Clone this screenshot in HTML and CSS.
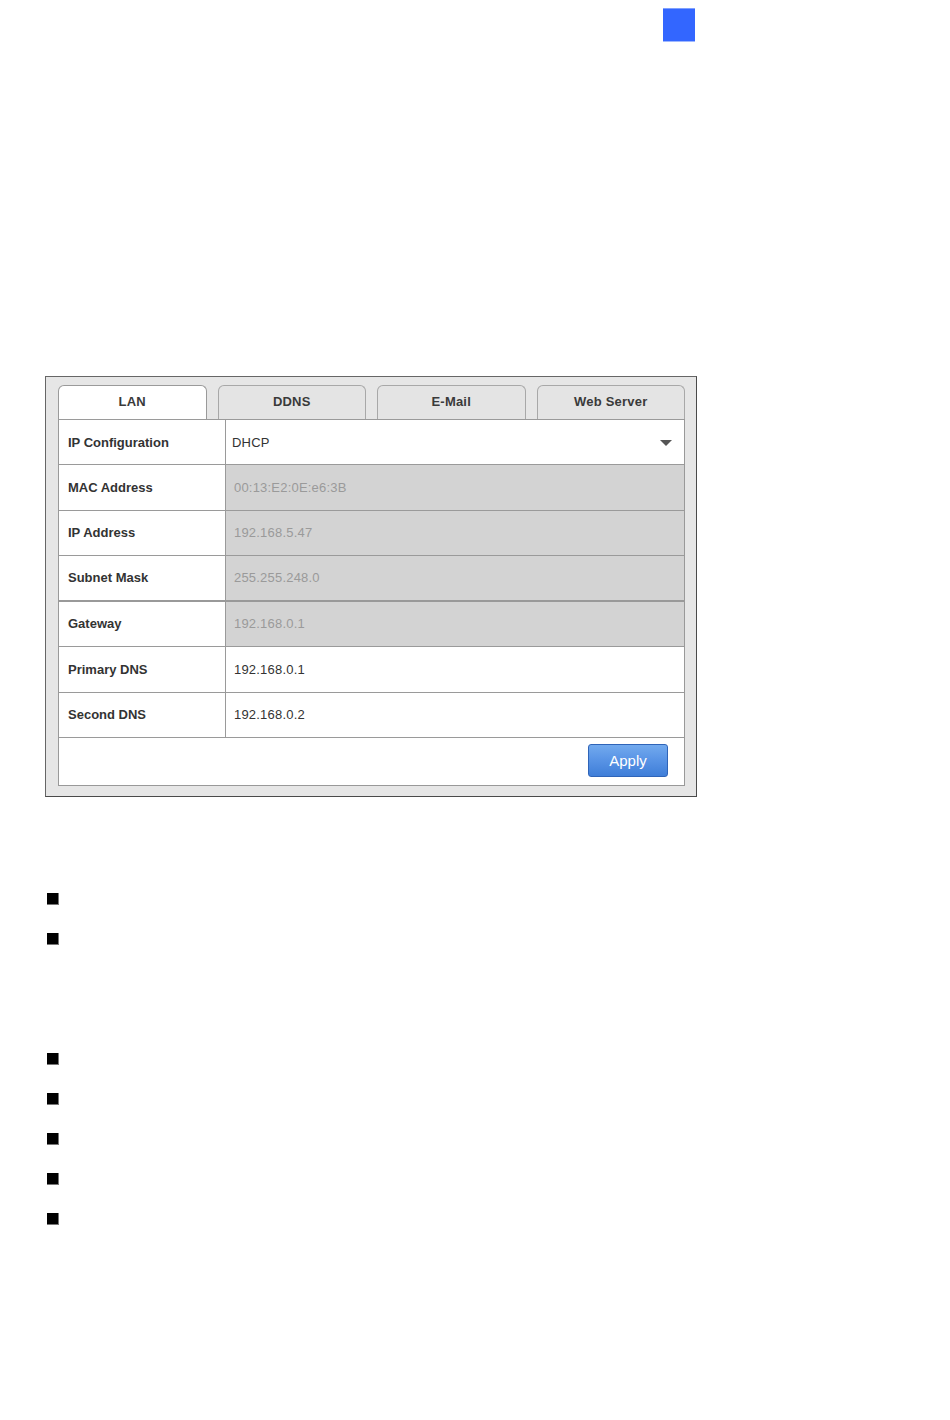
FILE: index.html
```html
<!DOCTYPE html>
<html>
<head>
<meta charset="utf-8">
<link rel="stylesheet" href="styles.css">
</head>
<body>
<div class="page">
  <div class="marker"></div>

  <div class="panel">
    <div class="tabs">
      <div class="tab active">LAN</div>
      <div class="tab">DDNS</div>
      <div class="tab">E-Mail</div>
      <div class="tab">Web Server</div>
    </div>
    <div class="table">
      <div class="row">
        <div class="label">IP Configuration</div>
        <div class="value select"><span class="dhcp">DHCP</span><span class="arrow"></span></div>
      </div>
      <div class="row">
        <div class="label">MAC Address</div>
        <div class="value disabled">00:13:E2:0E:e6:3B</div>
      </div>
      <div class="row">
        <div class="label">IP Address</div>
        <div class="value disabled">192.168.5.47</div>
      </div>
      <div class="row strong">
        <div class="label">Subnet Mask</div>
        <div class="value disabled">255.255.248.0</div>
      </div>
      <div class="row">
        <div class="label">Gateway</div>
        <div class="value disabled">192.168.0.1</div>
      </div>
      <div class="row">
        <div class="label">Primary DNS</div>
        <div class="value">192.168.0.1</div>
      </div>
      <div class="row">
        <div class="label">Second DNS</div>
        <div class="value">192.168.0.2</div>
      </div>
      <div class="actions">
        <button class="apply">Apply</button>
      </div>
    </div>
  </div>

  <ul class="bullets first">
    <li></li>
    <li></li>
  </ul>
  <ul class="bullets second">
    <li></li>
    <li></li>
    <li></li>
    <li></li>
    <li></li>
  </ul>
</div>
</body>
</html>
```

FILE: styles.css
```css
* { box-sizing: border-box; }

html, body {
  margin: 0;
  padding: 0;
  background: #ffffff;
}

body {
  font-family: "Liberation Sans", Arial, Helvetica, sans-serif;
  color: #333333;
}

.page {
  width: 950px;
  height: 1420px;
  padding-top: 8px;
}

.marker {
  margin-left: 663px;
  width: 32px;
  height: 34px;
  background: #3366ff;
  border-top: 1px solid #7fa0ff;
  border-bottom: 1px solid #9fb8ff;
}

.panel {
  margin-top: 334px;
  margin-left: 45px;
  width: 652px;
  height: 421px;
  background: #e6e6e6;
  border: 1px solid #4a4a4a;
  border-left-color: #666666;
  border-top-color: #666666;
  padding: 8px 11px 10px 12px;
}

.tabs {
  display: grid;
  grid-template-columns: repeat(4, 1fr);
  column-gap: 11px;
  height: 34px;
}

.tab {
  display: flex;
  align-items: center;
  justify-content: center;
  padding-bottom: 2px;
  font-size: 13px;
  font-weight: bold;
  color: #3a3a3a;
  letter-spacing: 0.2px;
  background: #e4e4e4;
  border: 1px solid #a8a8a8;
  border-bottom: none;
  border-radius: 6px 6px 0 0;
}

.tab.active {
  background: #ffffff;
  border-color: #9a9a9a;
}

.table {
  background: #ffffff;
  border: 1px solid #999999;
  border-top: 1px solid #9a9a9a;
}

.row {
  display: grid;
  grid-template-columns: 167px 1fr;
  height: 45.5px;
  border-bottom: 1px solid #9a9a9a;
}

.row:first-child {
  height: 45px;
}

.row.strong {
  border-bottom: 2px solid #999999;
}

.label {
  display: flex;
  align-items: center;
  padding-left: 9px;
  font-size: 13px;
  font-weight: bold;
  color: #333333;
  border-right: 1px solid #9a9a9a;
}

.value {
  display: flex;
  align-items: center;
  padding-left: 8px;
  font-size: 13px;
  color: #333333;
  letter-spacing: 0.2px;
}

.value.disabled {
  background: #d3d3d3;
  color: #9a9a9a;
}

.value.select {
  justify-content: space-between;
  padding-left: 6px;
  padding-right: 12px;
}

.arrow {
  width: 0;
  height: 0;
  border-left: 6px solid transparent;
  border-right: 6px solid transparent;
  border-top: 6px solid #555555;
  margin-top: 1px;
}

.actions {
  height: 47px;
  display: flex;
  align-items: center;
  justify-content: flex-end;
  padding-right: 16px;
  padding-bottom: 2px;
}

.apply {
  width: 80px;
  height: 33px;
  font-family: "Liberation Sans", Arial, Helvetica, sans-serif;
  font-size: 15px;
  color: #ffffff;
  background: linear-gradient(to bottom, #72aaee 0%, #5a95e6 45%, #3f7ed8 100%);
  border: 1px solid #2f64b8;
  border-radius: 3px;
  padding: 0;
  padding-bottom: 1px;
}

.bullets {
  list-style: none;
  margin: 0;
  padding: 0;
  margin-left: 47px;
}

.bullets.first {
  margin-top: 96px;
}

.bullets.second {
  margin-top: 80px;
}

.bullets li {
  height: 40px;
  display: flex;
}

.bullets li::before {
  content: "";
  display: block;
  width: 11px;
  height: 11px;
  background: #000000;
  border-right: 1px solid #777777;
  border-bottom: 1px solid #777777;
}
```
